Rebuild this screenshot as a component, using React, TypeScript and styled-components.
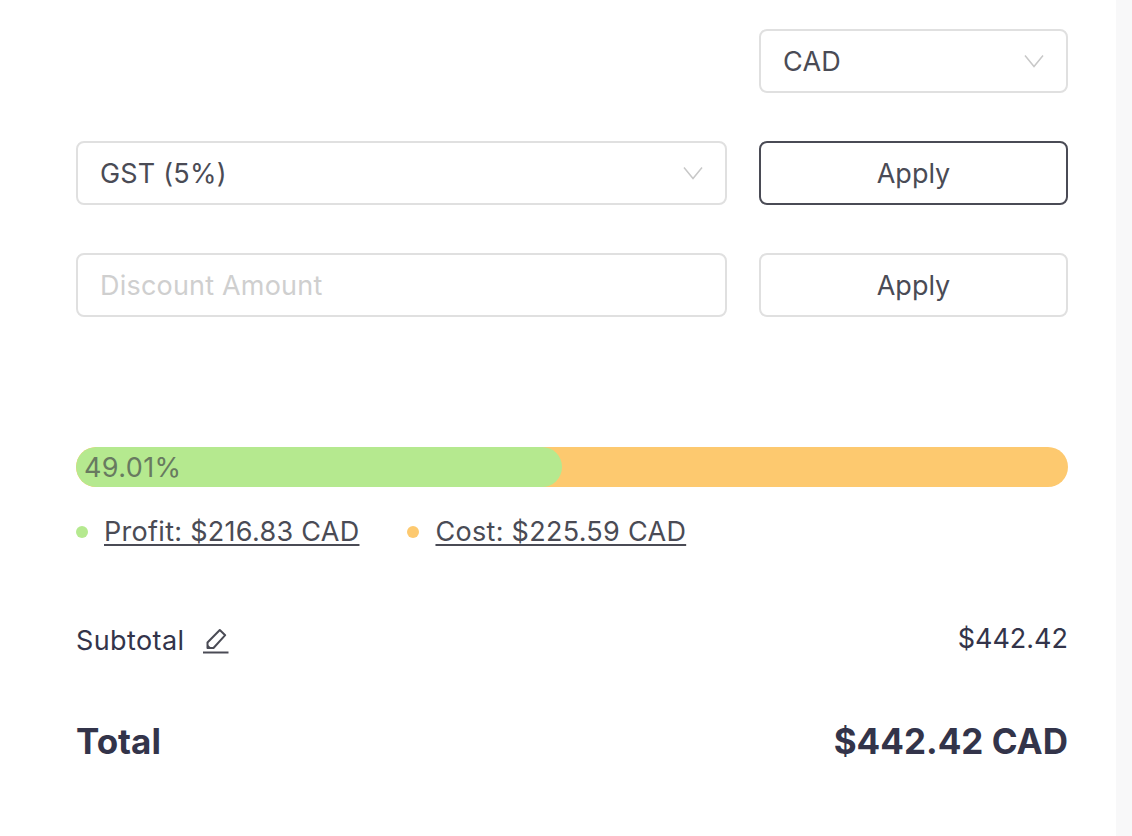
import React from 'react';
import styled, { createGlobalStyle } from 'styled-components';

const GlobalStyle = createGlobalStyle`
  html, body {
    background: #ffffff;
    margin: 0;
    padding: 0;
  }
  body {
    color: #33344a;
    font-family: Inter, "Liberation Sans", sans-serif;
  }
`;

const Page = styled.div`
  display: flex;
  height: 836px;
  overflow: hidden;
`;

const Content = styled.main`
  box-sizing: border-box;
  flex: 1;
  padding: 29px 48px 0 76px;
`;

const Gutter = styled.div`
  background: #f8f8f9;
  flex: 0 0 16px;
`;

const FormRow = styled.div`
  display: grid;
  gap: 32px;
  grid-template-columns: 651px 309px;
  margin-bottom: 48px;
`;

const Field = styled.div<{ $column?: number }>`
  align-items: center;
  background: #fff;
  border: 2px solid #e0e0e0;
  border-radius: 8px;
  box-sizing: border-box;
  color: #4a4b55;
  display: flex;
  font-size: 27px;
  grid-column: ${(props) => props.$column || 'auto'};
  height: 64px;
  justify-content: space-between;
  letter-spacing: 0.2px;
  padding: 0 22px;
`;

const Placeholder = styled.span`
  color: #cfcfcf;
`;

const Chevron = styled.svg`
  color: #c8c8c8;
  display: block;
  height: 14px;
  width: 20px;
`;

const ApplyButton = styled.button<{ $active?: boolean }>`
  background: #fff;
  border: 2px solid ${(props) => (props.$active ? '#4a4b55' : '#e0e0e0')};
  border-radius: 8px;
  box-sizing: border-box;
  color: #4a4b55;
  font-family: inherit;
  font-size: 27px;
  height: 64px;
  padding: 0;
`;

const Bar = styled.div`
  background: #fdc96f;
  border-radius: 20px;
  height: 40px;
  margin-top: 130px;
  overflow: hidden;
`;

const BarFill = styled.div`
  align-items: center;
  background: #b5e98f;
  border-radius: 20px;
  box-sizing: border-box;
  color: #687a60;
  display: flex;
  font-size: 27px;
  height: 100%;
  letter-spacing: 0.4px;
  padding-left: 8px;
`;

const Legend = styled.div`
  align-items: center;
  display: flex;
  gap: 48px;
  margin-top: 25px;
`;

const LegendItem = styled.div`
  align-items: center;
  display: flex;
  gap: 16px;
`;

const Dot = styled.span<{ $color: string }>`
  background: ${(props) => props.$color};
  border-radius: 50%;
  height: 12px;
  width: 12px;
`;

const LegendLink = styled.a`
  color: #4a4b55;
  font-size: 27px;
  letter-spacing: 0.29px;
  line-height: 40px;
  text-decoration: underline;
  text-decoration-thickness: 2px;
  text-underline-offset: 3px;
`;

const SummaryRow = styled.div<{ $top: number; $bold?: boolean }>`
  align-items: flex-start;
  display: flex;
  font-size: ${(props) => (props.$bold ? 35 : 27)}px;
  font-weight: ${(props) => (props.$bold ? 700 : 400)};
  justify-content: space-between;
  line-height: ${(props) => (props.$bold ? 44 : 46)}px;
  margin-top: ${(props) => props.$top}px;
`;

const SummaryLabel = styled.div`
  align-items: center;
  display: flex;
  gap: 19px;
  letter-spacing: 0.4px;
`;

const SummaryPrice = styled.span`
  line-height: 42px;
`;

const EditIcon = styled.svg`
  color: #4a4b55;
  display: block;
  height: 26px;
  width: 26px;
`;

const ChevronIcon = () => (
  <Chevron fill="none" viewBox="0 0 20 14">
    <path d="M1 1.5 L10 12.5 L19 1.5" stroke="currentColor" strokeWidth="1.5" />
  </Chevron>
);

const PROFIT_PERCENT = 49.01;

const App: React.FC = () => {
  return (
    <Page>
      <GlobalStyle />
      <Content>
        <FormRow>
          <Field $column={2}>
            CAD
            <ChevronIcon />
          </Field>
        </FormRow>
        <FormRow>
          <Field>
            GST (5%)
            <ChevronIcon />
          </Field>
          <ApplyButton $active>Apply</ApplyButton>
        </FormRow>
        <FormRow>
          <Field>
            <Placeholder>Discount Amount</Placeholder>
          </Field>
          <ApplyButton>Apply</ApplyButton>
        </FormRow>
        <Bar>
          <BarFill style={{ width: `${PROFIT_PERCENT}%` }}>49.01%</BarFill>
        </Bar>
        <Legend>
          <LegendItem>
            <Dot $color="#b5e98f" />
            <LegendLink>Profit: $216.83 CAD</LegendLink>
          </LegendItem>
          <LegendItem>
            <Dot $color="#fdc96f" />
            <LegendLink>Cost: $225.59 CAD</LegendLink>
          </LegendItem>
        </Legend>
        <SummaryRow $top={66}>
          <SummaryLabel>
            Subtotal
            <EditIcon fill="none" viewBox="0 0 26 26">
              <path
                d="M4.5 20 V14.5 L16.8 2 L22.2 7.2 L10.5 20 Z"
                stroke="currentColor"
                strokeLinejoin="round"
                strokeWidth="2"
              />
              <path d="M4.5 20 V16.5 L8.5 20 Z" fill="currentColor" />
              <path d="M0 24.5 H25.5" stroke="currentColor" strokeWidth="2" />
            </EditIcon>
          </SummaryLabel>
          <SummaryPrice>$442.42</SummaryPrice>
        </SummaryRow>
        <SummaryRow $bold $top={55}>
          <span>Total</span>
          <span>$442.42 CAD</span>
        </SummaryRow>
      </Content>
      <Gutter />
    </Page>
  );
};

export default App;
